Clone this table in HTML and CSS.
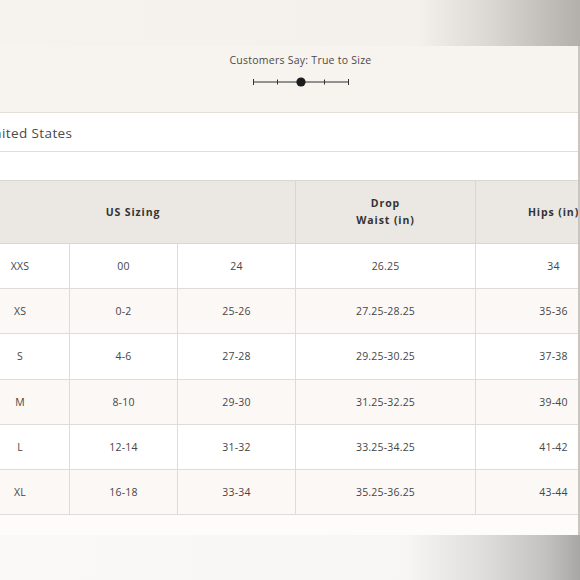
FILE: index.html
```html
<!DOCTYPE html>
<html lang="en">
<head>
<meta charset="utf-8">
<title>Size Chart</title>
<link rel="stylesheet" href="styles.css">
</head>
<body>
<div class="page">
  <div class="band band-top"></div>
  <div class="panel">
    <div class="inner">
      <div class="fit">
        <p class="fit-label">Customers Say: True to Size</p>
        <svg class="fit-scale" width="100" height="12" viewBox="0 0 100 12" aria-hidden="true">
          <line x1="2" y1="6" x2="98" y2="6" stroke="#333" stroke-width="1"/>
          <line x1="2.5" y1="3" x2="2.5" y2="9" stroke="#333" stroke-width="1"/>
          <line x1="26.5" y1="3.5" x2="26.5" y2="8.5" stroke="#333" stroke-width="1"/>
          <line x1="73.5" y1="3.5" x2="73.5" y2="8.5" stroke="#333" stroke-width="1"/>
          <line x1="97.5" y1="3" x2="97.5" y2="9" stroke="#333" stroke-width="1"/>
          <circle cx="50" cy="6" r="4.6" fill="#1c1c1c"/>
        </svg>
      </div>
      <div class="country">United States</div>
      <div class="spacer"></div>
      <table class="chart">
        <colgroup>
          <col class="c1"><col class="c2"><col class="c3"><col class="c4"><col class="c5">
        </colgroup>
        <thead>
          <tr>
            <th colspan="3">US Sizing</th>
            <th>Drop<br>Waist (in)</th>
            <th>Hips (in)</th>
          </tr>
        </thead>
        <tbody>
          <tr><td>XXS</td><td>00</td><td>24</td><td>26.25</td><td>34</td></tr>
          <tr class="alt"><td>XS</td><td>0-2</td><td>25-26</td><td>27.25-28.25</td><td>35-36</td></tr>
          <tr><td>S</td><td>4-6</td><td>27-28</td><td>29.25-30.25</td><td>37-38</td></tr>
          <tr class="alt"><td>M</td><td>8-10</td><td>29-30</td><td>31.25-32.25</td><td>39-40</td></tr>
          <tr><td>L</td><td>12-14</td><td>31-32</td><td>33.25-34.25</td><td>41-42</td></tr>
          <tr class="alt"><td>XL</td><td>16-18</td><td>33-34</td><td>35.25-36.25</td><td>43-44</td></tr>
        </tbody>
      </table>
    </div>
  </div>
  <div class="band band-bottom"></div>
</div>
</body>
</html>
```

FILE: styles.css
```css
* { box-sizing: border-box; }

html, body {
  margin: 0;
  padding: 0;
}

body {
  width: 580px;
  height: 580px;
  overflow: hidden;
  background: #f6f2ed;
  font-family: "Open Sans", "Liberation Sans", sans-serif;
  color: #444;
}

.page {
  width: 580px;
  height: 580px;
  display: flex;
  flex-direction: column;
}

.band {
  flex: none;
}

.band-top {
  height: 46px;
  background: linear-gradient(to right, #f6f2ed 0%, #f4f0eb 72%, #dcd8d3 84%, #c2beb9 94%, #b3afab 100%);
}

.band-bottom {
  height: 45px;
  background: linear-gradient(to right, #fbf9f7 0%, #f8f6f4 70%, #dedcda 84%, #c4c2c0 94%, #a9a7a5 100%);
}

.panel {
  flex: none;
  height: 489px;
  width: 580px;
  overflow: hidden;
  background: #fdfcfb;
  border-right: 2px solid #c9c5c1;
}

.inner {
  width: 661px;
  margin-left: -30px;
}

.fit {
  height: 67px;
  background: #f7f3ee;
  border-bottom: 1px solid #e4ded8;
  display: flex;
  flex-direction: column;
  align-items: center;
  padding-top: 6px;
}

.fit-label {
  margin: 0;
  font-size: 10.5px;
  line-height: 16px;
  color: #4a4a4a;
  letter-spacing: 0.25px;
}

.fit-scale {
  display: block;
  margin-top: 8px;
}

.country {
  height: 39px;
  background: #fff;
  border-bottom: 1px solid #dedede;
  padding-left: 13px;
  padding-top: 1px;
  display: flex;
  align-items: center;
  font-size: 13.5px;
  color: #4a4a4a;
  letter-spacing: 0.4px;
}

.spacer {
  height: 28px;
  background: #fff;
}

.chart {
  width: 661px;
  border-collapse: collapse;
  table-layout: fixed;
  font-size: 10.5px;
}

.c1 { width: 99px; }
.c2 { width: 108px; }
.c3 { width: 118px; }
.c4 { width: 180px; }
.c5 { width: 156px; }

.chart th {
  height: 63px;
  background: #ebe7e2;
  border: 1px solid #dad6d1;
  font-weight: 700;
  color: #333;
  letter-spacing: 0.9px;
  line-height: 17px;
  font-size: 10.5px;
  padding: 0;
}

.chart td {
  height: 45.2px;
  text-align: center;
  border: 1px solid #dedcdb;
  color: #464646;
  background: #fff;
  padding: 0;
  letter-spacing: 0.2px;
}

.chart tr.alt td {
  background: #fcf8f6;
}
```
